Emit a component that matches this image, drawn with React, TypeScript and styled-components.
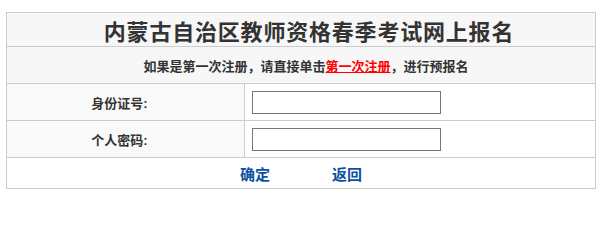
import React from 'react'
import styled, { createGlobalStyle } from 'styled-components'

const GlobalStyle = createGlobalStyle`
  html, body { margin: 0; padding: 0; background: #fff; }
  body {
    font-family: "Liberation Sans", "Noto Sans CJK SC", sans-serif;
    color: #333;
  }
`

export default function App() {
  return (
    <>
      <GlobalStyle />
      <Page>
        <Board>
          <TitleRow>内蒙古自治区教师资格春季考试网上报名</TitleRow>
          <NoticeRow>
            如果是第一次注册，请直接单击<RedLink href="#">第一次注册</RedLink>，进行预报名
          </NoticeRow>
          <FieldRow>
            <Label>身份证号:</Label>
            <InputCell>
              <TextInput type="text" />
            </InputCell>
          </FieldRow>
          <FieldRow>
            <Label>个人密码:</Label>
            <InputCell>
              <TextInput type="password" />
            </InputCell>
          </FieldRow>
          <ActionRow>
            <ActionLink href="#">确定</ActionLink>
            <ActionLink href="#">返回</ActionLink>
          </ActionRow>
        </Board>
      </Page>
    </>
  )
}

const Page = styled.div`
  padding: 12px 0 0 6px;
`

const Board = styled.div`
  width: 588px;
  border: 1px solid #cccccc;
  display: flex;
  flex-direction: column;
`

const TitleRow = styled.div`
  height: 33px;
  display: flex;
  align-items: center;
  justify-content: center;
  padding-left: 16px;
  background: #f7f7f7;
  font-size: 22px;
  letter-spacing: 0.8px;
  font-weight: bold;
  color: #333;
  border-bottom: 1px solid #cccccc;
`

const NoticeRow = styled.div`
  height: 36px;
  display: flex;
  align-items: center;
  justify-content: center;
  padding-left: 10px;
  background: #f7f7f7;
  font-size: 13px;
  font-weight: bold;
  color: #333;
  border-bottom: 1px solid #cccccc;
`

const RedLink = styled.a`
  color: #ff0000;
  text-decoration: underline;
`

const FieldRow = styled.div`
  height: 36px;
  display: grid;
  grid-template-columns: 238px 1fr;
  border-bottom: 1px solid #cccccc;
`

const Label = styled.div`
  display: flex;
  align-items: center;
  justify-content: center;
  padding-right: 12px;
  background: #f9f9f9;
  border-right: 1px solid #cccccc;
  font-size: 13px;
  font-weight: bold;
  color: #333;
`

const InputCell = styled.div`
  display: flex;
  align-items: center;
  padding-left: 7px;
  background: #fff;
`

const TextInput = styled.input`
  box-sizing: border-box;
  width: 189px;
  height: 23px;
  border: 1px solid #767676;
  padding: 1px 2px;
  margin: 0;
  outline: none;
`

const ActionRow = styled.div`
  height: 30px;
  display: flex;
  align-items: center;
  justify-content: center;
  gap: 62px;
  background: #fff;
`

const ActionLink = styled.a`
  color: #0b52a0;
  font-size: 15px;
  font-weight: bold;
  text-decoration: none;
`
